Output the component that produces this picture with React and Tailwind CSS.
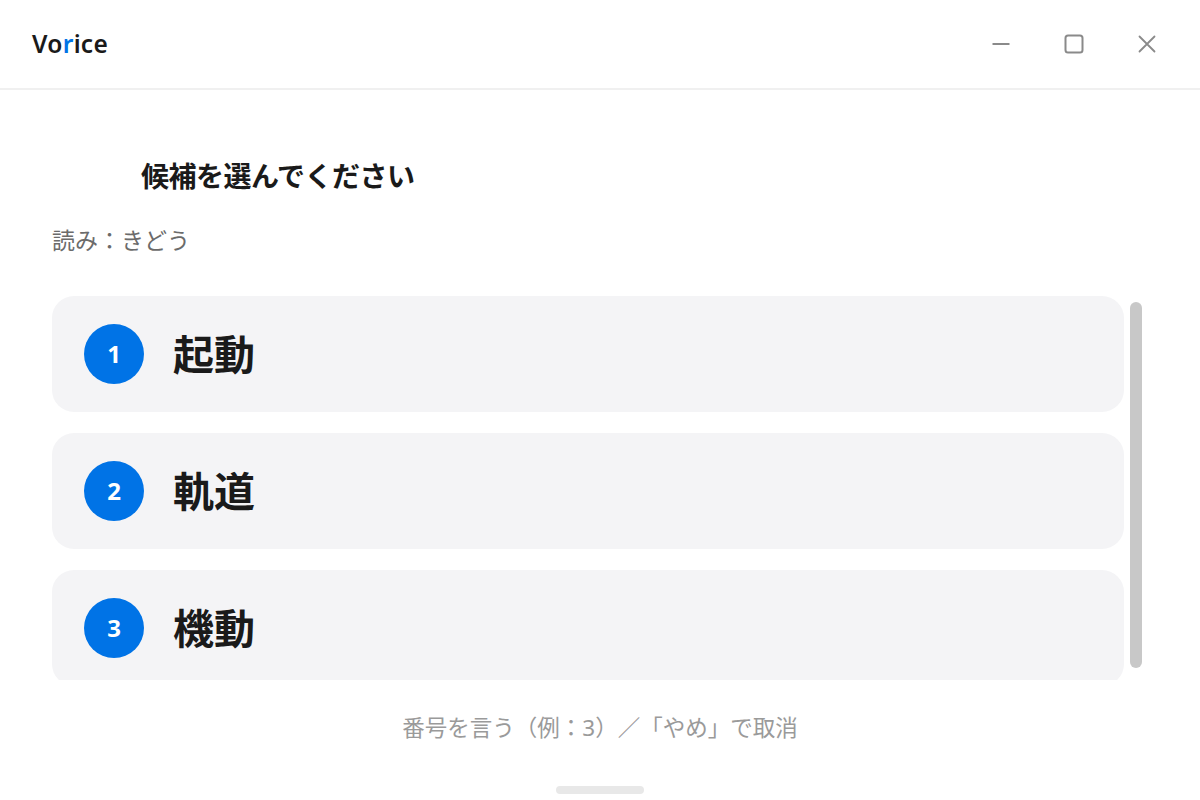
import React from "react";

const CANDIDATES = ["起動", "軌道", "機動"];

const FONT = { fontFamily: '"Noto Sans", "Noto Sans CJK JP", sans-serif' };

const WindowButton = ({ children }) => (
  <button className="flex w-[48px] h-[48px] items-center justify-center text-[#8a8a8a]" type="button">
    {children}
  </button>
);

const CandidateCard = ({ index, word }) => (
  <div className="flex shrink-0 items-center h-[116px] rounded-[22px] bg-[#f4f4f6] pl-[32px]">
    <div className="flex w-[60px] h-[60px] items-center justify-center rounded-full bg-[#0073e6] text-white text-[24px] font-bold">
      {index}
    </div>
    <span className="ml-[29px] text-[41px] font-bold text-[#1a1a1a] leading-none">{word}</span>
  </div>
);

export default function App() {
  return (
    <div className="flex flex-col w-[1200px] h-[800px] bg-white overflow-hidden" style={FONT}>
      <div className="flex shrink-0 h-[90px] items-center justify-between pl-[32px] pr-[29px] border-b-2 border-[#f0f0f0]">
        <span className="text-[24.5px] font-semibold text-[#1a1a1a] tracking-[0.3px]">
          Vo<span className="text-[#0073e6]">r</span>ice
        </span>
        <div className="flex gap-[25px]">
          <WindowButton>
            <svg width="20" height="20" viewBox="0 0 20 20">
              <line x1="1.5" y1="10" x2="18.5" y2="10" stroke="currentColor" strokeWidth="2" />
            </svg>
          </WindowButton>
          <WindowButton>
            <svg width="20" height="20" viewBox="0 0 20 20">
              <rect x="1.5" y="1.5" width="17" height="17" rx="2.5" fill="none" stroke="currentColor" strokeWidth="2" />
            </svg>
          </WindowButton>
          <WindowButton>
            <svg width="20" height="20" viewBox="0 0 20 20">
              <path d="M2.5 2.5 L17.5 17.5 M17.5 2.5 L2.5 17.5" stroke="currentColor" strokeWidth="1.8" strokeLinecap="round" />
            </svg>
          </WindowButton>
        </div>
      </div>

      <div className="flex flex-col flex-1 pl-[52px] pr-[58px]">
        <h1 className="mt-[66px] pl-[89px] text-[28px] font-bold leading-[40px] text-[#1a1a1a] tracking-[-0.5px]">
          候補を選んでください
        </h1>
        <p className="mt-[28px] text-[23px] leading-[32px] text-[#6b6b6b]">読み：きどう</p>

        <div className="flex mt-[40px] h-[384px] gap-[6px]">
          <div className="flex flex-col flex-1 gap-[21px] overflow-hidden">
            {CANDIDATES.map((word, i) => (
              <CandidateCard key={word} index={i + 1} word={word} />
            ))}
          </div>
          <div className="w-[12px] mt-[6px] mb-[12px] rounded-full bg-[#c8c8c8]" />
        </div>

        <p className="mt-[32px] text-center text-[22.5px] leading-[32px] text-[#9a9a9a] pl-[6px]">
          番号を言う（例：3）／「やめ」で取消
        </p>
      </div>

      <div className="flex justify-center pb-[6px]">
        <div className="w-[88px] h-[8px] rounded-full bg-[#e8e8e8]" />
      </div>
    </div>
  );
}
